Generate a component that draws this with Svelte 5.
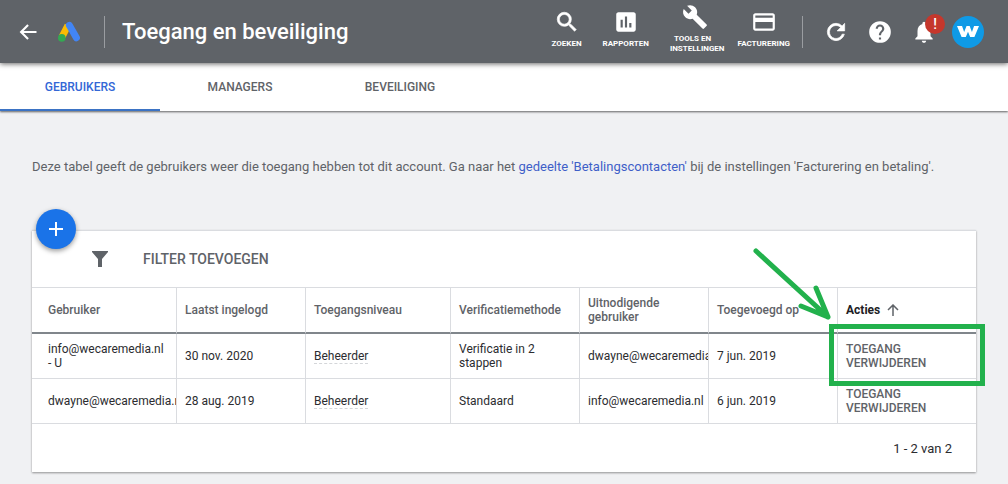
<script>
  const tabs = ['Gebruikers', 'Managers', 'Beveiliging'];
  let active = $state('Gebruikers');

  const widths = [145, 129, 145, 129, 129, 129, 138];
  const heads = ['Gebruiker', 'Laatst ingelogd', 'Toegangsniveau', 'Verificatiemethode', 'Uitnodigende gebruiker', 'Toegevoegd op'];
  const rows = [
    { user: 'info@wecaremedia.nl - U', last: '30 nov. 2020', level: 'Beheerder', method: 'Verificatie in 2 stappen', by: 'dwayne@wecaremedia.nl', added: '7 jun. 2019' },
    { user: 'dwayne@wecaremedia.nl', last: '28 aug. 2019', level: 'Beheerder', method: 'Standaard', by: 'info@wecaremedia.nl', added: '6 jun. 2019' }
  ];
</script>

<header class="bar">
  <button class="icon back" aria-label="Terug">
    <svg viewBox="0 0 24 24" width="24" height="24"><path d="M20.5 11H7.6l5.2-5.2L11.3 4.3 3.6 12l7.7 7.7 1.5-1.5L7.6 13h12.9z" /></svg>
  </button>
  <svg class="logo" viewBox="0 0 24 22" width="24" height="22" aria-hidden="true">
    <path d="M11 4.3 5.2 15.5" stroke="#fbbc04" stroke-width="7" />
    <circle cx="4.8" cy="16.9" r="3.8" fill="#34a853" />
    <path d="M12.4 4.4 19.4 16.8" stroke="#4285f4" stroke-width="7" stroke-linecap="round" />
  </svg>
  <h1>Toegang en beveiliging</h1>
  <nav class="tools">
    <button class="tool">
      <svg viewBox="0 0 24 24" width="26" height="26"><path stroke="#fff" stroke-width=".6" d="M15.5 14h-.79l-.28-.27A6.47 6.47 0 0 0 16 9.5 6.5 6.5 0 1 0 9.5 16c1.61 0 3.09-.59 4.23-1.57l.27.28v.79l5 4.99L20.49 19l-4.99-5zm-6 0C7.01 14 5 11.99 5 9.5S7.01 5 9.5 5 14 7.01 14 9.5 11.99 14 9.5 14z" /></svg>
      <span>ZOEKEN</span>
    </button>
    <button class="tool">
      <svg viewBox="0 0 24 24" width="26" height="26"><path d="M19 3H5c-1.1 0-2 .9-2 2v14c0 1.1.9 2 2 2h14c1.1 0 2-.9 2-2V5c0-1.1-.9-2-2-2zM9 17H7v-7h2v7zm4 0h-2V7h2v10zm4 0h-2v-4h2v4z" /></svg>
      <span>RAPPORTEN</span>
    </button>
    <button class="tool wide">
      <svg viewBox="0 0 24 24" width="26" height="26"><path d="M22.7 19l-9.1-9.1c.9-2.3.4-5-1.5-6.9-2-2-5-2.4-7.4-1.3L9 6 6 9 1.6 4.7C.4 7.1.9 10.1 2.9 12.1c1.9 1.9 4.6 2.4 6.9 1.5l9.1 9.1c.4.4 1 .4 1.4 0l2.3-2.3c.5-.4.5-1.1.1-1.4z" /></svg>
      <span>TOOLS EN<br />INSTELLINGEN</span>
    </button>
    <button class="tool">
      <svg viewBox="0 0 24 24" width="26" height="26"><path d="M20 4H4c-1.110 0-1.990.890-1.990 2L2 18c0 1.110.890 2 2 2h16c1.110 0 2-.890 2-2V6c0-1.110-.890-2-2-2zm0 14H4v-6h16v6zm0-10H4V6h16v2z" /></svg>
      <span>FACTURERING</span>
    </button>
  </nav>
  <div class="account">
    <button class="icon" aria-label="Vernieuwen">
      <svg viewBox="0 0 24 24" width="26" height="26"><path stroke="#fff" stroke-width=".6" d="M17.65 6.35A7.96 7.96 0 0 0 12 4a8 8 0 1 0 7.73 10h-2.080A6 6 0 1 1 12 6c1.660 0 3.140.690 4.220 1.780L13 11h7V4l-2.350 2.350z" /></svg>
    </button>
    <button class="icon" aria-label="Help">
      <svg viewBox="0 0 24 24" width="26" height="26"><path d="M12 2a10 10 0 1 0 0 20 10 10 0 0 0 0-20zm1 17h-2v-2h2v2zm2.070-7.750-.9.920C13.450 12.900 13 13.500 13 15h-2v-.5c0-1.100.450-2.100 1.170-2.830l1.240-1.260c.370-.360.590-.860.590-1.410a2 2 0 1 0-4 0H8a4 4 0 1 1 8 0c0 .880-.360 1.680-.930 2.250z" /></svg>
    </button>
    <button class="icon bell" aria-label="Meldingen">
      <svg viewBox="0 0 24 24" width="26" height="26"><path d="M12 22c1.100 0 2-.9 2-2h-4c0 1.100.9 2 2 2zm6-6v-5c0-3.070-1.640-5.640-4.500-6.320V4a1.500 1.500 0 0 0-3 0v.680C7.630 5.360 6 7.920 6 11v5l-2 2v1h16v-1l-2-2z" /></svg>
      <span class="badge">!</span>
    </button>
    <button class="avatar" aria-label="Account">
      <svg viewBox="0 0 24 14" width="22" height="13"><path d="M0 1h5.500l2.300 6.500L10.400 1h3.400l2.500 6.500L18.600 1H24l-5 12h-4.600L12 7.200 9.600 13H5z" /></svg>
    </button>
  </div>
</header>

<nav class="tabs">
  {#each tabs as tab}
    <button class:active={tab === active} onclick={() => (active = tab)}>{tab.toUpperCase()}</button>
  {/each}
</nav>

<main>
  <p>Deze tabel geeft de gebruikers weer die toegang hebben tot dit account. Ga naar het <a href="#betalingen">gedeelte 'Betalingscontacten'</a> bij de instellingen 'Facturering en betaling'.</p>

  <section class="card">
    <button class="add" aria-label="Gebruiker toevoegen">
      <svg viewBox="0 0 24 24" width="24" height="24"><path d="M19 13h-6v6h-2v-6H5v-2h6V5h2v6h6z" /></svg>
    </button>
    <div class="filter">
      <svg viewBox="0 0 16 16" width="16" height="16" aria-hidden="true"><path d="M0 0h16v1L10 8v8H6V8L0 1z" /></svg>
      <button>FILTER TOEVOEGEN</button>
    </div>
    <table>
      <colgroup>
        {#each widths as w}<col style:width="{w}px" />{/each}
      </colgroup>
      <thead>
        <tr>
          {#each heads as h}<th>{h}</th>{/each}
          <th class="sorted">
            <button>Acties
              <svg viewBox="0 0 12 12" width="12" height="12"><path d="M6 12V1M1 6l5-5 5 5" /></svg>
            </button>
          </th>
        </tr>
      </thead>
      <tbody>
        {#each rows as r, i}
          <tr>
            <td>{r.user}</td>
            <td>{r.last}</td>
            <td><span class="level">{r.level}</span></td>
            <td>{r.method}</td>
            <td>{r.by}</td>
            <td>{r.added}</td>
            <td class="action">
              <button>TOEGANG VERWIJDEREN</button>
              {#if i === 0}
                <span class="frame"></span>
                <svg class="arrow" viewBox="0 0 80 74" width="80" height="74" aria-hidden="true"><path d="M4 4 76 70M64 41l12 29M49 59l27 11" /></svg>
              {/if}
            </td>
          </tr>
        {/each}
      </tbody>
    </table>
    <footer>1 - 2 van 2</footer>
  </section>
</main>

<style>
  :global(body) {
    background: #f0f1f3;
    font-family: Roboto, sans-serif;
    font-size: 12px;
    line-height: 14px;
    color: #2b2c2f;
  }
  button {
    border: 0;
    padding: 0;
    background: none;
    font: inherit;
    color: inherit;
    cursor: pointer;
  }
  svg { display: block; }

  .bar {
    position: relative;
    z-index: 1;
    display: flex;
    align-items: center;
    height: 63px;
    padding: 0 24px 0 16px;
    box-sizing: border-box;
    background: #5f6368;
    color: #fff;
    box-shadow: 0 1px 5px rgba(0, 0, 0, .6);
  }
  .bar svg { fill: #fff; }
  .logo { margin: 0 23px 0 17px; }
  h1 {
    flex: 1;
    margin: 0;
    padding-left: 17px;
    border-left: 1px solid #9a9da1;
    font-size: 22px;
    font-weight: 500;
    line-height: 32px;
    white-space: nowrap;
  }
  .tools {
    display: flex;
    align-items: center;
    gap: 13px;
    height: 32px;
    padding-right: 12px;
    border-right: 1px solid #9a9da1;
  }
  .tool {
    display: flex;
    flex-direction: column;
    align-items: center;
    gap: 4px;
    padding-bottom: 6px;
    font-size: 8px;
    line-height: 10px;
    font-weight: 700;
  }
  .tool:first-child { margin-right: 8px; }
  .tool.wide {
    align-items: flex-start;
    margin-left: 8px;
    text-align: left;
    text-indent: 4px;
  }
  .tool.wide svg { margin-left: 12px; }
  .account {
    display: flex;
    align-items: center;
    gap: 18px;
    margin-left: 20px;
  }
  .icon { position: relative; }
  .badge {
    position: absolute;
    top: -5px;
    right: -8px;
    width: 20px;
    border-radius: 50%;
    background: #c5372c;
    font-size: 14px;
    font-weight: 500;
    line-height: 20px;
    text-align: center;
  }
  .avatar {
    display: grid;
    place-items: center;
    width: 32px;
    height: 32px;
    margin-left: -3px;
    border-radius: 50%;
    background: #0f9ae6;
  }

  .tabs {
    display: flex;
    height: 48px;
    background: #fff;
    box-shadow: 0 1px 2px rgba(0, 0, 0, .6);
  }
  .tabs button {
    width: 160px;
    padding-top: 2px;
    border-bottom: 2px solid transparent;
    font-weight: 500;
    color: #5f6368;
  }
  .tabs .active {
    border-color: #3b73c4;
    color: #3367d6;
  }

  main { padding: 48px 32px 12px; }
  p {
    margin: 0 0 55px;
    font-size: 13px;
    line-height: 16px;
    color: #5f6368;
  }
  a { color: #3f5fc8; text-decoration: none; }

  .card {
    position: relative;
    background: #fff;
    box-shadow: 0 1px 2px rgba(0, 0, 0, .4);
  }
  .add {
    position: absolute;
    top: -21px;
    left: 4px;
    display: grid;
    place-items: center;
    width: 40px;
    height: 40px;
    border-radius: 50%;
    background: #1a73e8;
    box-shadow: 0 2px 5px rgba(0, 0, 0, .4);
  }
  .add svg { fill: #fff; }
  .filter {
    display: flex;
    align-items: center;
    gap: 35px;
    height: 56px;
    padding-left: 60px;
    border-top: 1px solid #dadce0;
    font-size: 14px;
    font-weight: 500;
    color: #5f6368;
  }
  .filter svg { fill: #5f6368; }

  table {
    width: 100%;
    table-layout: fixed;
    border-spacing: 0;
    border-top: 1px solid #dadce0;
  }
  th, td {
    height: 44px;
    padding: 0 8px;
    border-right: 1px solid #dadce0;
    border-bottom: 1px solid #dadce0;
    text-align: left;
    overflow: hidden;
  }
  th:first-child, td:first-child { padding-left: 16px; }
  th:last-child, td:last-child { border-right: 0; }
  th {
    border-bottom: 2px solid #80868b;
    font-weight: 500;
    color: #5f6368;
  }
  .sorted { color: #202124; }
  .sorted button {
    display: flex;
    align-items: center;
    gap: 7px;
    font-weight: 700;
  }
  .sorted path {
    fill: none;
    stroke: #5f6368;
    stroke-width: 1.500;
  }
  .level { border-bottom: 1px dashed #d4d6d9; }
  td.action {
    position: relative;
    overflow: visible;
    color: #5f6368;
  }
  .action button {
    font-weight: 500;
    text-align: left;
  }
  .frame {
    position: absolute;
    inset: -10px -9px -8px;
    border: 5px solid #22b14c;
    pointer-events: none;
  }
  .arrow {
    position: absolute;
    top: -87px;
    left: -86px;
    pointer-events: none;
  }
  .arrow path {
    fill: none;
    stroke: #22b14c;
    stroke-width: 5;
    stroke-linecap: round;
    stroke-linejoin: round;
  }
  footer {
    padding: 18px 24px 16px;
    font-size: 13px;
    text-align: right;
  }
</style>
